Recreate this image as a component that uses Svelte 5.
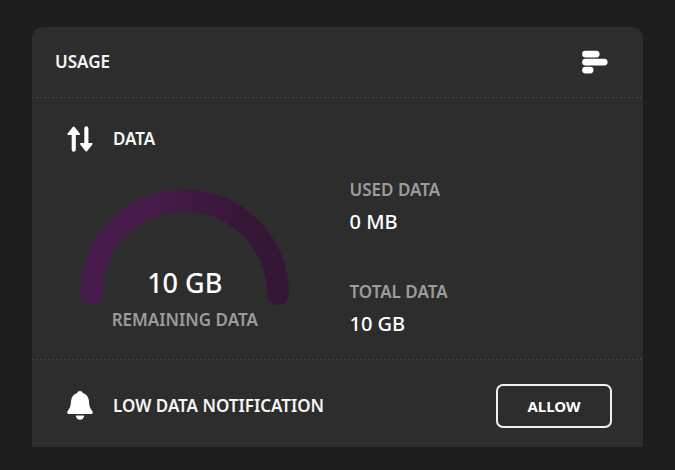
<script>
	let remaining = '10 GB'
	let stats = [
		{ label: 'USED DATA', value: '0 MB' },
		{ label: 'TOTAL DATA', value: '10 GB' }
	]
</script>

<main>
	<section class="card">
		<header>
			<h1>USAGE</h1>
			<svg class="bars" width="26" height="24" viewBox="0 0 26 24" aria-hidden="true">
				<path d="M3.500 4.100h10.700M3.500 12.100h18.700M3.500 20.100h4.600" />
			</svg>
		</header>

		<div class="data">
			<div class="title">
				<svg width="26" height="26" viewBox="0 0 26 26" aria-hidden="true">
					<path d="M5.800.9a1.200 1.200 0 0 1 1.800 0L12.800 7.600c.5.700.2 1.400-.7 1.400H8.800V23.800a2 2 0 0 1-4.100 0V9H1.300C.4 9 .1 8.300.6 7.600Z" />
					<path d="M18.400 25.100a1.200 1.200 0 0 0 1.800 0L25.400 18.400c.5-.7.2-1.400-.7-1.400H21.400V2.200a2 2 0 0 0-4.100 0V17H13.900c-.9 0-1.200.7-.7 1.400Z" />
				</svg>
				<h2>DATA</h2>
			</div>
			<div class="columns">
				<div class="gauge">
					<svg width="210" height="118" viewBox="0 0 210 118" aria-hidden="true">
						<defs>
							<linearGradient id="purple" x1="0" y1="0" x2="1" y2="0">
								<stop offset="0" stop-color="#471b4b" />
								<stop offset="0.35" stop-color="#451b49" />
								<stop offset="0.8" stop-color="#371638" />
								<stop offset="1" stop-color="#351636" />
							</linearGradient>
						</defs>
						<path d="M11 106a93.500 93.500 0 0 1 187 0" />
					</svg>
					<div class="remaining">
						<strong>{remaining}</strong>
						<span>REMAINING DATA</span>
					</div>
				</div>
				<dl>
					{#each stats as stat}
					<div>
						<dt>{stat.label}</dt>
						<dd>{stat.value}</dd>
					</div>
					{/each}
				</dl>
			</div>
		</div>

		<footer>
			<div class="title">
				<svg width="26" height="30" viewBox="0 0 26 30" aria-hidden="true">
					<path d="M13 0c1.500 0 2.400.8 2.900 2 3.500 1.200 5.800 4.300 6.100 8.300.3 4.700.8 6.700 3.200 9.600 1.200 1.600.6 3.100-1.200 3.100H2C.2 23-.4 21.500.8 19.900 3.200 17 3.700 15 4 10.300 4.300 6.300 6.600 3.200 10.100 2 10.600.8 11.500 0 13 0Z" />
					<path d="M8.800 24.500h8.400a4.200 4.200 0 0 1-8.400 0Z" />
				</svg>
				<h2>LOW DATA NOTIFICATION</h2>
			</div>
			<button type="button">ALLOW</button>
		</footer>
	</section>
</main>

<style>
	:global(body) {
		background: #1d1d1d;
	}

	main {
		padding: 27px 32px 23px;
		font-family: "Noto Sans", "Open Sans", sans-serif;
		color: #f6f6f6;
	}

	.card {
		background: #2d2d2d;
		border-radius: 10px 10px 0 0;
	}

	h1, h2, dl, dd {
		margin: 0;
	}

	h1, h2 {
		font-size: 17px;
		line-height: 24px;
		font-weight: 600;
	}

	header {
		display: flex;
		align-items: center;
		justify-content: space-between;
		height: 70px;
		padding: 0 35px 0 23px;
	}

	.bars path {
		fill: none;
		stroke: #fff;
		stroke-width: 6.8;
		stroke-linecap: round;
	}

	.data {
		padding: 29px 0 22px;
		background:
			repeating-linear-gradient(90deg, #505050 0 1px, transparent 1px 4px) top / 100% 1px no-repeat,
			repeating-linear-gradient(90deg, #505050 0 1px, transparent 1px 4px) bottom / 100% 1px no-repeat;
	}

	.title {
		display: flex;
		align-items: center;
		gap: 20px;
	}

	.title svg {
		fill: #fff;
	}

	.data .title {
		padding-left: 35px;
	}

	.columns {
		display: grid;
		grid-template-columns: 1fr 1fr;
		align-items: start;
		margin-top: 26px;
	}

	.gauge {
		display: grid;
		justify-items: center;
		padding-top: 10px;
	}

	.gauge > * {
		grid-area: 1 / 1;
	}

	.gauge path {
		fill: none;
		stroke: url(#purple);
		stroke-width: 22;
		stroke-linecap: round;
	}

	.remaining {
		display: flex;
		flex-direction: column;
		align-items: center;
		padding-top: 77px;
	}

	.remaining strong {
		font-size: 27px;
		line-height: 36px;
		font-weight: 500;
		color: #fff;
	}

	.remaining span, dt {
		font-size: 17px;
		line-height: 24px;
		font-weight: 600;
		color: #9c9c9c;
	}

	.remaining span {
		margin-top: 7px;
	}

	dl {
		display: grid;
		gap: 44px;
		padding-left: 12px;
	}

	dd {
		margin-top: 6px;
		font-size: 20px;
		line-height: 28px;
		font-weight: 500;
		color: #fff;
	}

	footer {
		display: flex;
		align-items: center;
		justify-content: space-between;
		padding: 24px 31px 19px 35px;
	}

	button {
		width: 116px;
		height: 44px;
		background: none;
		border: 2px solid #f0f0f0;
		border-radius: 7px;
		font: 700 15px "Noto Sans", "Open Sans", sans-serif;
		color: #fff;
		cursor: pointer;
	}
</style>
